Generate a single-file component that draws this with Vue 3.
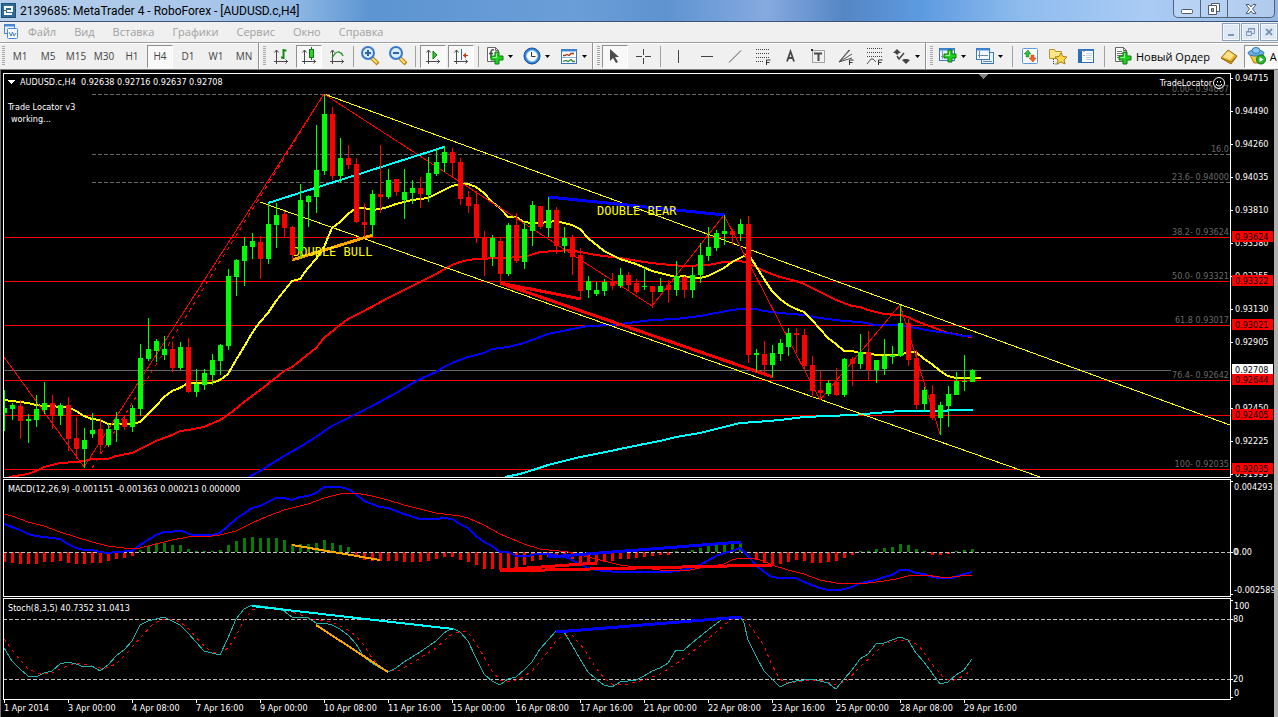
<script setup>
const frames = ['M1', 'M5', 'M15', 'M30', 'H1', 'H4', 'D1', 'W1', 'MN']
const menus = ['Файл', 'Вид', 'Вставка', 'Графики', 'Сервис', 'Окно', 'Справка']
const quote = 'AUDUSD.c,H4  0.92638 0.92716 0.92637 0.92708'

const axes = '<path d="M5.5 4v14M3 15.5h14M3.500 6.500l2-2.500l2 2.500M14.500 13.500l2 2l-2 2" fill="none" stroke="#4a4a4a"/>'
const plus = (x, y) => `<path transform="translate(${x} ${y})" d="M4 0h4v4h4v4h-4v4h-4v-4h-4v-4h4z" fill="#1fd01f" stroke="#0a7a12"/><path transform="translate(${x} ${y})" d="M5.500 1.500v4h-4" fill="none" stroke="#a8ffa0"/>`
const lens = '<path d="M12 12l6 6" stroke="#b8860b" stroke-width="4"/><path d="M12 12l5 5" stroke="#ffe27a" stroke-width="2"/><circle cx="8" cy="7" r="6" fill="#d8ecfb" stroke="#3b78c8" stroke-width="2"/><path d="M5 7h6" stroke="#2a62b8" stroke-width="2"/>'
const page = '<path d="M2.500 1.500h8l3 3v11h-11z" fill="#fff" stroke="#666"/><path d="M10.500 1.500v3h3" fill="none" stroke="#666"/>'

const icons = {
  bars: axes + '<path d="M12.500 3v10M12.500 4.500h3M10 11.500h2" stroke="#138a1b" stroke-width="2" fill="none"/>',
  candles: axes + '<path d="M12.500 1v13" stroke="#0a7a12"/><rect x="10.500" y="3.500" width="4" height="8" fill="#2bd42b" stroke="#0a7a12"/>',
  line: axes + '<path d="M5 12q4-7 7-6q3 1 4 4" stroke="#2a9a2f" stroke-width="1.500" fill="none"/>',
  zoomIn: lens + '<path d="M8 4v6" stroke="#2a62b8" stroke-width="2"/>',
  zoomOut: lens,
  scroll: axes + '<path d="M10 5l4 4l-4 4z" fill="#35cf35" stroke="#0a7a12"/>',
  shift: axes + '<path d="M10.500 3v11" stroke="#2f6db5"/><path d="M12 9.500h5" stroke="#c63a10"/><path d="M12 9.500l3-3v6z" fill="#c63a10"/>',
  indicators: page + '<path d="M9 4q-3-1-3 2v6M4 7.500h4" fill="none" stroke="#444" stroke-width="1.500"/>' + plus(6, 6),
  clock: '<circle cx="10" cy="10" r="8" fill="#2f86dd" stroke="#1b4f94"/><circle cx="10" cy="10" r="5.500" fill="#fff" stroke="#9cc8f0"/><path d="M9.500 6v4.500h4" fill="none" stroke="#333"/>',
  template: '<rect x="2.500" y="3.500" width="15" height="14" fill="#fff" stroke="#3c78bd"/><path d="M3 4.500h14" stroke="#3f86d8" stroke-width="2"/><path d="M3 11.500h14" stroke="#8ab4e0"/><path d="M4 9.500h2l2-1l2 1l2-2h3" fill="none" stroke="#a03018" stroke-width="1.300"/><path d="M4 15.500l3-1l2 1l3-2l2 2h2" fill="none" stroke="#2a8a30" stroke-width="1.300"/>',
  cursor: '<path d="M5 3v12l3-3l3 5l2-1l-3-5h4z" fill="#4a4a4a"/>',
  cross: '<path d="M10.500 3v6M10.500 12v6M3 10.500h6M12 10.500h6" stroke="#444"/>',
  vline: '<path d="M10.500 4v13" stroke="#444"/>',
  hline: '<path d="M5 10.500h12" stroke="#444"/>',
  trend: '<path d="M5 16.500l12-12" stroke="#555"/>',
  fibo: '<path d="M4 3.500h14M4 7.500h14M4 11.500h14M4 15.500h8" stroke="#444" stroke-dasharray="1 1"/><path d="M14.500 19v-5h4M14.500 16.500h3" fill="none" stroke="#333"/>',
  text: '<path d="M7 15.500l3.500-10l3.500 10M8 12h5" fill="none" stroke="#4a4a4a" stroke-width="1.800"/>',
  label: '<path d="M4.500 4.500h12v12h-12z" fill="none" stroke="#555" stroke-dasharray="1 1"/><path d="M6 7.500h8M10.500 7v8" stroke="#4a4a4a" stroke-width="2"/><path d="M3 3h2v2h-2z" fill="#333"/>',
  fan: '<path d="M3 16l10-12M3 16l13-8M3 16l13-4M3 16l11-12" stroke="#555" fill="none"/><path d="M13.500 19v-5h4M13.500 16.500h3" fill="none" stroke="#333"/>',
  retrace: '<path d="M3 2.500h15M3 6.500h15M3 10.500h15" stroke="#444" stroke-dasharray="1 1"/><path d="M3 18l4-5h2l3 3" fill="none" stroke="#555"/><path d="M14.500 19v-5h4M14.500 16.500h3" fill="none" stroke="#333"/>',
  arrows: '<path d="M1 7l4-4l4 4h-2l-2 2l-2-2zM10 14l2-1h3l3 1l-4 4z" fill="#444"/><path d="M5 10l2 3l5-6" fill="none" stroke="#444" stroke-width="1.500"/>',
  newChart: '<rect x="1.500" y="2.500" width="15" height="12" fill="#e8f3ff" stroke="#3c78bd"/><path d="M2 3.500h14" stroke="#3f86d8" stroke-width="2"/><path d="M4.500 5v8M3 10.500h11" stroke="#7c96b0"/>' + plus(6, 4),
  profiles: '<rect x="6.500" y="6.500" width="12" height="11" fill="#e8f3ff" stroke="#3c78bd"/><rect x="1.500" y="2.500" width="13" height="11" fill="#f4f9ff" stroke="#3c78bd"/><path d="M2 3.500h12" stroke="#3f86d8" stroke-width="2"/><path d="M4.500 5v7M3 9.500h10M8 15.500h9" stroke="#6f8aa8"/>',
  market: '<rect x="2.500" y="2.500" width="15" height="15" rx="1" fill="#fff" stroke="#5b9bd8"/><path d="M8 4l3 4h-2v3h-3v-3h-2z" fill="#2fbf3a" stroke="#167a20" stroke-width=".5"/><path d="M13 16l3-4h-2v-3h-3v3h-2z" fill="#f0622a" stroke="#b03a10" stroke-width=".5"/>',
  navigator: '<path d="M1.500 3.500h5l1 2h6v7h-12z" fill="#ffe68a" stroke="#b8922a"/><path d="M5.500 13v5h4" fill="none" stroke="#444" stroke-dasharray="1 1"/><path d="M13 7l2 3.500l4 .5l-3 3l1 4l-4-2l-4 2l1-4l-3-3l4-.5z" fill="#ffd84a" stroke="#a87a1a"/>',
  data: '<rect x="2.500" y="3.500" width="15" height="13" fill="#fff" stroke="#2f6cb8"/><path d="M3 4.500h14" stroke="#3f86d8"/><path d="M4.500 5v11" stroke="#2f6cb8" stroke-width="3"/><path d="M7.500 5.500h1M7.500 9.500h1" stroke="#d03020"/><path d="M10 7.500h6M10 9.500h6M10 11.500h6M10 13.500h6" stroke="#c4d6ea"/>',
  order: page + '<path d="M4 5.500h5M4 7.500h7M4 9.500h7M4 11.500h3" stroke="#777"/>' + plus(6, 6),
  gold: '<path d="M2 12l7-8l9 6l-6 8z" fill="#e7b32c" stroke="#9a6c10"/><path d="M2 12l10 4l6-6" fill="none" stroke="#9a6c10"/><path d="M4 11l5-6l6 4l-4 5z" fill="#ffe08a"/>',
  expert: '<path d="M3 9l4 8h7l3-8z" fill="#f3c93c" stroke="#a87a1a"/><ellipse cx="9" cy="7" rx="8" ry="3" fill="#6ab2e8" stroke="#2f75b0"/><ellipse cx="9" cy="4.500" rx="4" ry="3" fill="#8ac8f2" stroke="#2f75b0"/><circle cx="14" cy="13.500" r="4.500" fill="#28b62c" stroke="#0f7a16"/><path d="M12.500 11l4 2.500l-4 2.500z" fill="#fff"/>'
}

const groups = [
  [
    { i: 'bars', t: 'Бары' }, { i: 'candles', t: 'Свечи', on: 1 }, { i: 'line', t: 'Линия' }, { sep: 5 },
    { i: 'zoomIn', t: 'Увеличить' }, { i: 'zoomOut', t: 'Уменьшить' }, { sep: 7 },
    { i: 'scroll', t: 'Автопрокрутка', on: 1 }, { i: 'shift', t: 'Сдвиг графика', on: 1 }, { sep: 6 },
    { i: 'indicators', t: 'Индикаторы', drop: 1 }, { i: 'clock', t: 'Периоды', drop: 1 }, { i: 'template', t: 'Шаблоны', drop: 1 }
  ],
  [
    { i: 'cursor', t: 'Курсор', on: 1 }, { i: 'cross', t: 'Перекрестие' }, { sep: 7 },
    { i: 'vline', t: 'Вертикальная линия' }, { i: 'hline', t: 'Горизонтальная линия' }, { i: 'trend', t: 'Трендовая линия' },
    { i: 'fibo', t: 'Линии Фибоначчи' }, { i: 'text', t: 'Текст' }, { i: 'label', t: 'Текстовая метка' },
    { i: 'fan', t: 'Веер Фибоначчи' }, { i: 'retrace', t: 'Расширение Фибоначчи' }, { i: 'arrows', t: 'Стрелки', drop: 1 }
  ],
  [
    { i: 'newChart', t: 'Новый график', drop: 1 }, { i: 'profiles', t: 'Профили', drop: 1 }, { sep: 8 },
    { i: 'market', t: 'Обзор рынка' }, { i: 'navigator', t: 'Навигатор' }, { i: 'data', t: 'Окно данных' }, { sep: 8 }
  ]
]

// direction, high, body top, body bottom, low (one bar every 8 px)
const bars = `G 390 408 413 431|G 403 405 409 420|R 400 406 421 439|G 414 419 421 443|G 395 409 420 427|G 382 403 410 414|R 395 403 416 429|G 403 405 416 425|R 397 405 439 451|R 417 438 449 459|G 428 440 449 468|G 413 430 434 438|R 418 429 445 454|G 424 429 445 447|G 412 419 430 442|R 416 419 427 430|G 405 408 427 432|G 344 358 409 416|G 318 349 359 361|G 339 341 351 362|G 336 349 355 360|R 342 349 368 372|G 342 347 368 370|R 338 347 392 393|G 369 384 392 397|G 369 373 385 390|G 354 360 375 385|G 344 345 361 375|G 269 276 346 350|G 259 260 277 296|G 237 246 261 286|G 233 241 247 259|R 236 242 259 279|G 203 224 259 264|G 203 215 225 248|R 211 214 228 237|R 226 227 255 260|G 184 200 251 259|G 195 196 202 227|G 125 170 197 213|G 94 114 171 175|R 107 114 176 180|G 138 158 176 183|R 145 158 165 169|R 158 164 222 223|R 203 222 225 237|G 190 194 225 236|R 145 194 197 213|G 169 180 197 199|R 179 179 192 196|G 169 192 200 219|G 180 188 193 204|R 177 188 194 208|G 157 173 195 202|G 149 162 174 176|G 146 152 163 172|R 148 152 163 177|R 158 162 199 205|R 191 197 206 213|R 191 204 237 243|R 231 237 258 276|G 235 238 257 266|R 238 241 274 282|G 223 225 274 276|R 213 225 261 263|G 222 229 262 269|G 201 205 231 246|R 206 206 227 229|G 197 210 228 237|R 207 210 246 254|G 227 238 246 253|R 235 237 257 275|R 248 255 291 299|G 276 281 290 298|G 282 290 294 296|G 279 282 291 296|R 273 281 286 290|G 268 275 286 288|R 272 275 285 291|R 279 283 292 294|G 268 286 287 290|R 286 286 292 308|G 278 286 292 292|R 280 285 290 303|G 261 276 290 296|R 276 277 290 298|G 267 275 290 298|G 243 255 275 283|G 227 247 256 261|G 230 233 248 251|G 215 231 234 245|R 229 231 235 245|G 219 224 234 241|R 216 224 355 363|G 349 353 355 372|R 341 354 365 374|G 345 353 365 377|G 339 343 354 361|G 328 333 347 356|R 328 333 335 353|R 329 335 366 370|R 356 365 391 397|R 370 390 393 400|G 380 383 394 396|R 368 382 395 396|G 358 359 395 397|R 357 359 364 386|G 334 352 364 369|R 331 352 370 380|G 360 360 370 383|G 339 356 369 375|G 346 355 357 364|G 305 323 356 357|R 319 323 360 366|R 350 358 405 409|G 387 390 404 411|R 385 394 418 420|G 402 405 418 435|G 386 394 406 427|G 372 381 395 395|G 355 381 382 391|G 369 370 382 382`
const candles = bars.split('|').map((s, i) => {
  const [d, h, t, b, l] = s.split(' ')
  return { x: 4 + 8 * i, c: d === 'G' ? '#00ff00' : '#ff0000', h: +h, t: +t, b: +b, l: +l }
})

const redLines = [237, 281, 325, 380, 415, 469]
const fibs = [
  [94, '0.00- 0.94607'], [154, '16.0'], [182, '23.6- 0.94000'], [237, '38.2- 0.93624'],
  [281, '50.0- 0.93321'], [325, '61.8 0.93017'], [380, '76.4- 0.92642'], [469, '100- 0.92035']
]
const averages = [
  { c: '#00ffff', p: '505,477 520,474 536,469 548,465 564,461 580,457 596,454 620,449 644,444 660,441 676,437 700,433 724,427 740,423 756,422 780,420 804,417 828,416 852,415 876,413 900,411 945,411 950,410 973,410' },
  { c: '#ff0000', p: '9,477 28,474 36,471 44,467 60,463 76,462 84,461 92,459 108,459 116,456 132,453 140,449 156,441 172,435 180,431 188,430 204,427 220,420 228,415 244,402 268,384 284,371 292,367 316,348 324,338 340,325 348,319 356,315 364,311 388,298 412,286 436,274 452,265 460,262 468,260 476,259 500,258 524,257 540,252 556,251 570,250 580,252 596,255 620,258 644,262 660,264 684,266 708,265 724,262 740,261 748,263 756,267 764,271 780,277 796,281 804,284 820,292 836,300 852,306 860,307 868,310 884,314 900,315 908,317 916,321 932,327 948,333 956,334 964,336 972,337' },
  { c: '#0000ff', p: '247,478 260,471 284,456 300,447 316,437 330,427 348,418 372,406 396,393 418,380 436,372 444,367 452,363 468,357 484,353 492,349 508,347 524,343 548,334 572,329 588,326 612,325 628,323 652,320 676,319 700,316 716,313 732,310 740,309 756,309 764,311 780,313 804,315 820,318 844,321 860,322 876,325 900,325 916,328 932,331 948,333 964,336 972,336' },
  { c: '#ffff00', p: '4,400 20,402 28,403 36,405 44,406 52,406 60,407 68,407 76,411 84,416 92,419 100,420 108,424 132,424 140,422 148,414 156,406 164,397 172,391 180,388 188,383 212,383 220,380 228,374 236,360 244,347 252,333 260,322 268,313 276,301 284,291 292,281 300,279 308,268 316,259 324,247 332,228 340,222 348,214 356,208 364,208 372,210 380,209 388,207 396,204 404,202 412,200 420,199 428,198 436,194 444,190 452,186 460,184 468,184 476,187 484,193 492,202 500,208 508,217 516,217 524,222 532,223 540,223 548,222 556,221 572,225 580,229 588,238 604,251 612,255 620,259 636,264 652,271 668,275 676,277 684,276 692,278 700,278 708,276 716,272 724,268 732,262 740,258 748,254 756,266 764,279 772,291 780,299 788,305 796,309 804,312 812,320 820,329 828,338 836,344 844,351 852,351 860,353 868,353 876,355 884,355 900,355 908,352 916,352 924,359 932,364 940,371 948,376 956,378 981,378' }
]
const trends = [
  { c: '#ffff00', w: 1, p: '324,94 1230,425' },
  { c: '#ffff00', w: 1, p: '260,202 1040,477' },
  { c: '#ff0000', w: 1, p: '4,357 84,467 324,94 652,306 724,215 820,400 900,305 940,434' },
  { c: '#ff0000', w: 1, d: '4 4', p: '92,468 324,94' },
  { c: '#00ffff', w: 2, p: '268,203 444,147' },
  { c: '#ffa500', w: 3, p: '292,260 373,235' },
  { c: '#0000ff', w: 3, p: '548,197 725,215' },
  { c: '#ff0000', w: 3, p: '500,283 581,299' },
  { c: '#ff0000', w: 3, p: '500,283 773,377' }
]
const scale = [
  [78, '0.94715'], [111, '0.94490'], [144, '0.94260'], [177, '0.94035'], [210, '0.93810'], [243, '0.93580'], [276, '0.93355'],
  [309, '0.93130'], [342, '0.92905'], [408, '0.92450'], [441, '0.92225'], [474, '0.91995']
]
const tags = [
  [370, '0.92708', '#ffffff'], [237, '0.93624', '#ff0000'], [281, '0.93322', '#ff0000'], [325, '0.93021', '#ff0000'],
  [380, '0.92644', '#ff0000'], [415, '0.92405', '#ff0000'], [469, '0.92035', '#ff0000']
]

// end of each histogram bar; zero sits at 552
const hist = [562, 563, 564, 564, 564, 562, 562, 561, 563, 564, 564, 563, 563, 561, 559, 558, 556, 550, 546, 543, 543, 545, 545, 549, 551, 551, 551, 550, 545, 541, 538, 537, 538, 538, 538, 540, 544, 544, 544, 543, 540, 543, 545, 547, 556, 560, 561, 561, 561, 561, 562, 562, 562, 561, 559, 557, 557, 560, 562, 565, 569, 569, 570, 569, 569, 565, 561, 560, 557, 557, 558, 559, 563, 563, 562, 562, 561, 559, 559, 558, 557, 556, 555, 555, 551, 552, 550, 548, 546, 545, 545, 544, 543, 552, 560, 563, 565, 564, 562, 560, 561, 563, 563, 562, 561, 558, 555, 551, 551, 549, 548, 547, 544, 545, 549, 551, 555, 555, 554, 551, 550, 549]
  .map((y, i) => ({ x: 3 + 8 * i, y: Math.min(y, 552), h: Math.abs(y - 552), c: y > 552 ? '#ff0000' : '#008000' }))
const macd = [
  { c: '#0000ff', w: 2, p: '4,524 20,530 28,534 36,536 44,537 60,539 68,544 76,548 84,550 92,550 100,552 108,553 116,552 132,551 140,545 156,535 164,532 182,531 192,535 212,535 220,533 228,526 236,519 252,508 260,506 276,498 284,498 292,500 300,497 308,496 316,493 324,487 340,487 348,489 356,494 364,501 380,507 388,508 404,514 420,519 436,519 444,518 452,519 460,524 468,528 476,536 484,542 492,546 500,552 508,552 516,556 528,556 536,554 548,554 560,556 568,558 580,564 590,569 604,571 620,572 668,572 684,570 700,565 716,556 724,553 732,551 740,548 748,556 756,565 764,572 772,577 780,578 796,578 804,582 820,588 828,590 840,590 852,587 860,583 876,580 884,577 892,575 900,570 908,570 916,573 924,574 932,577 940,578 952,578 964,574 972,572' },
  { c: '#ff0000', w: 1, p: '4,514 12,516 28,522 44,526 60,532 76,537 92,542 108,546 124,548 140,548 156,544 172,540 188,537 212,536 220,535 236,531 252,523 268,516 284,510 308,504 324,498 340,494 356,493 372,496 388,500 404,505 420,509 436,513 460,516 468,518 484,525 500,534 524,544 540,549 568,552 580,555 592,558 620,565 644,568 660,570 690,570 700,568 724,564 732,560 740,558 752,558 764,561 772,565 788,570 804,574 820,580 836,583 852,584 868,583 884,581 896,579 908,576 925,575 940,577 952,577 968,575 972,575' },
  { c: '#ffa500', w: 2, p: '292,545 380,560' },
  { c: '#ff0000', w: 3, p: '500,570 597,563' },
  { c: '#ff0000', w: 3, p: '500,571 773,565' },
  { c: '#0000ff', w: 3, p: '548,557 741,542' }
]
const stoch = [
  { c: '#ff0000', w: 1, d: '3 4', p: '4,639 16,655 28,669 40,674 52,673 60,669 76,663 92,666 104,669 116,664 128,652 140,638 152,625 160,620 172,619 180,622 190,630 200,642 210,651 220,654 228,648 236,636 244,620 252,610 260,607 276,608 292,612 316,620 332,622 348,630 356,636 364,645 372,658 380,667 388,671 400,670 412,663 436,648 452,634 464,631 470,635 480,650 492,671 500,680 508,682 520,679 532,671 544,657 556,641 564,635 572,635 584,649 596,668 604,678 612,684 628,684 644,680 660,674 676,664 700,646 724,625 734,618 744,619 752,628 764,646 772,665 780,679 788,684 804,681 820,680 836,685 848,680 860,667 876,652 884,644 900,640 910,640 920,647 932,664 944,678 952,681 964,676 972,669' },
  { c: '#20b2aa', w: 1, p: '4,648 12,661 20,669 28,676 38,676 44,673 52,671 60,664 68,662 76,664 84,667 92,666 100,671 108,665 116,656 124,650 132,641 140,625 148,621 156,619 164,617 172,621 180,625 188,633 196,642 204,651 212,653 220,655 228,638 236,619 244,609 252,605 260,606 276,608 284,611 292,617 308,618 316,623 324,623 332,625 340,629 348,635 356,644 364,657 372,663 380,668 388,672 396,668 404,662 420,652 436,641 444,633 452,628 460,632 468,641 476,658 484,674 492,681 500,685 508,679 516,677 524,670 532,662 540,649 548,640 556,631 564,632 572,645 580,659 588,672 596,679 604,685 612,687 620,682 636,680 644,676 652,671 660,668 668,663 676,650 684,650 692,643 708,630 724,618 740,616 744,623 748,640 756,656 764,671 772,679 780,687 788,683 796,681 804,680 812,679 820,681 828,683 836,689 844,679 852,670 860,659 868,654 876,644 884,643 892,640 900,637 908,640 916,653 924,662 932,673 940,684 948,682 956,675 964,670 972,659' },
  { c: '#00ffff', w: 2, p: '252,606 453,629' },
  { c: '#ffa500', w: 2, p: '316,625 388,672' },
  { c: '#0000ff', w: 3, p: '556,632 741,617' }
]
const dates = ['1 Apr 2014', '3 Apr 00:00', '4 Apr 08:00', '7 Apr 16:00', '9 Apr 00:00', '10 Apr 08:00', '11 Apr 16:00', '15 Apr 00:00', '16 Apr 08:00', '17 Apr 16:00', '21 Apr 00:00', '22 Apr 08:00', '23 Apr 16:00', '25 Apr 00:00', '28 Apr 08:00', '29 Apr 16:00']
</script>

<template>
  <div class="window">
    <header class="title">
      <svg class="logo" width="15" height="15" viewBox="0 0 15 15">
        <rect width="15" height="15" fill="#1d4f78" />
        <rect x="1" y="1" width="13" height="13" fill="#2f6a98" />
        <path d="M4 12V8M4 7V4h7v4H6M4 11h7" fill="none" stroke="#fff" stroke-width="2" />
      </svg>
      <h1>2139685: MetaTrader 4 - RoboForex - [AUDUSD.c,H4]</h1>
      <div class="caption">
        <button aria-label="Свернуть"><svg width="14" height="14" viewBox="0 0 14 14"><rect x="1.500" y="7.500" width="11" height="4" rx="1" fill="#fff" stroke="#4c5a6c" /></svg></button>
        <button aria-label="Развернуть"><svg width="14" height="14" viewBox="0 0 14 14"><path d="M4.500 1.500h8v8h-8z" fill="#fff" stroke="#4c5a6c" /><path d="M1.500 3.500h8v9h-8z" fill="#fff" stroke="#4c5a6c" /><path d="M4.500 6.500h2v3h-2z" fill="#9db8d8" stroke="#4c5a6c" /></svg></button>
        <button class="close" aria-label="Закрыть"><svg width="14" height="14" viewBox="0 0 14 14"><path d="M2 2.500h3l2 2.500l2-2.500h3l-3.500 4.500l3.500 4.500h-3l-2-2.500l-2 2.500h-3l3.500-4.500z" fill="#fff" stroke="#4c5a6c" /></svg></button>
      </div>
    </header>

    <nav class="menu">
      <svg width="16" height="16" viewBox="0 0 16 16">
        <rect x="1.500" y=".5" width="10" height="9" fill="#eaf3ff" stroke="#4b86d2" /><path d="M2 1.500h9" stroke="#4b86d2" stroke-width="2" />
        <rect x="4.500" y="4.500" width="10" height="10" rx="1" fill="#f6faff" stroke="#4b86d2" />
        <path d="M6 8l2 4l1.500-4l1.500 4l2-3" fill="none" stroke="#3f7ad0" />
      </svg>
      <button v-for="m in menus" :key="m">{{ m }}</button>
      <div class="mdi">
        <button aria-label="Свернуть график"><svg width="11" height="11"><path d="M2 8h6" stroke="#7f97b4" stroke-width="2" /></svg></button>
        <button aria-label="Восстановить график"><svg width="11" height="11"><path d="M3.500 4V1.500h6v5H7M1.500 4.500h5v4h-5zM3 2h7M1 5h6" fill="none" stroke="#7f97b4" /></svg></button>
        <button aria-label="Закрыть график"><svg width="11" height="11"><path d="M2 2l6 6M8 2l-6 6" stroke="#7f97b4" stroke-width="2" /></svg></button>
      </div>
    </nav>

    <div class="tools">
      <div class="group">
        <i class="grip" />
        <button v-for="f in frames" :key="f" :class="{ on: f === 'H4' }">{{ f }}</button>
      </div>
      <div v-for="(g, k) in groups" :key="k" class="group">
        <i class="grip" />
        <template v-for="(b, n) in g" :key="n">
          <i v-if="b.sep" class="sep" :style="{ width: b.sep + 'px' }" />
          <button v-else :class="{ on: b.on, drop: b.drop }" :aria-label="b.t">
            <svg width="20" height="20" viewBox="0 0 20 20" v-html="icons[b.i]" />
            <svg v-if="b.drop" class="caret" width="5" height="3" viewBox="0 0 5 3"><path d="M0 0h5L2.500 3z" /></svg>
          </button>
        </template>
        <template v-if="k === 2">
          <button class="wide"><svg width="20" height="20" viewBox="0 0 20 20" v-html="icons.order" /><span>Новый Ордер</span></button>
          <button aria-label="MetaEditor"><svg width="20" height="20" viewBox="0 0 20 20" v-html="icons.gold" /></button>
          <button class="wide on auto"><svg width="20" height="20" viewBox="0 0 20 20" v-html="icons.expert" /><span>А</span></button>
        </template>
      </div>
    </div>

    <main class="charts">
      <div class="pane price">
        <svg>
          <g transform="translate(-4 -74)" class="crisp">
            <line v-for="y in [94, 154, 182]" :key="y" x1="92" x2="4000" :y1="y + 0.5" :y2="y + 0.5" stroke="#696969" stroke-dasharray="4 2" />
            <rect x="4" y="370" width="1167" height="1" fill="#696969" />
            <rect v-for="y in redLines" :key="y" x="4" :y="y" width="4000" height="1" fill="#ff0000" />
            <polyline v-for="a in averages" :key="a.c" :points="a.p" :stroke="a.c" stroke-width="2" fill="none" />
            <polyline v-for="(t, n) in trends" :key="n" :points="t.p" :stroke="t.c" :stroke-width="t.w" :stroke-dasharray="t.d" fill="none" />
            <text class="mono" x="293" y="256">DOUBLE BULL</text>
            <text class="mono" x="597" y="215">DOUBLE BEAR</text>
            <g v-for="c in candles" :key="c.x" :fill="c.c">
              <rect :x="c.x" :y="c.h" width="1" :height="c.l - c.h" />
              <rect :x="c.x - 2" :y="c.t" width="5" :height="c.b - c.t" />
            </g>
            <path d="M979 74h9l-4 5h-1z" fill="#808080" />
            <path d="M7 80h8l-4 4z" fill="#fff" />
            <text class="quote" x="20" y="85">{{ quote }}</text>
            <text x="8" y="110">Trade Locator v3</text>
            <text x="11" y="122">working...</text>
          </g>
          <g transform="translate(0 -74)">
            <text v-for="f in fibs" :key="f[0]" class="fib" x="100%" dx="-1" :y="f[0] - 2">{{ f[1] }}</text>
            <text class="end" x="100%" dx="-18" y="86">TradeLocator</text>
          </g>
          <svg x="100%" y="3" width="14" height="14" overflow="visible">
            <g transform="translate(-17 0)" fill="none" stroke="#fff">
              <circle cx="6" cy="6" r="5.500" /><path d="M3 7q3 4 6 0M4.500 4v1.500M7.500 4v1.500" />
            </g>
          </svg>
        </svg>
      </div>
      <svg class="axis">
        <g transform="translate(0 -73)">
          <template v-for="s in scale" :key="s[0]">
            <rect x="0" :y="s[0]" width="2" height="1" fill="#fff" />
            <text x="4" :y="s[0] + 3">{{ s[1] }}</text>
          </template>
          <template v-for="s in tags" :key="s[0]">
            <rect x="1" :y="s[0] - 6" width="41" height="11" :fill="s[2]" />
            <text class="tag" x="4" :y="s[0] + 3">{{ s[1] }}</text>
          </template>
        </g>
      </svg>

      <div class="pane macd">
        <svg>
          <g transform="translate(-4 -480)" class="crisp">
            <rect v-for="h in hist" :key="h.x" :x="h.x" :y="h.y" width="3" :height="h.h" :fill="h.c" />
            <line x1="3" x2="4000" y1="552.500" y2="552.500" stroke="#c0c0c0" stroke-dasharray="4 2" />
            <polyline v-for="(t, n) in macd" :key="n" :points="t.p" :stroke="t.c" :stroke-width="t.w" fill="none" />
            <text x="8" y="492">MACD(12,26,9) -0.001151 -0.001363 0.000213 0.000000</text>
          </g>
        </svg>
      </div>
      <svg class="axis">
        <g transform="translate(0 -479)">
          <rect v-for="y in [481, 552, 594]" :key="y" x="0" :y="y" width="2" height="1" fill="#fff" />
          <text x="3" y="490">0.004293</text>
          <text x="2" y="555">0</text>
          <text x="3" y="555">0.00</text>
          <text x="3" y="593">-0.002589</text>
        </g>
      </svg>

      <div class="pane stoch">
        <svg>
          <g transform="translate(-4 -599)" class="crisp">
            <line v-for="y in [619, 679]" :key="y" x1="3" x2="4000" :y1="y + 0.5" :y2="y + 0.5" stroke="#c0c0c0" stroke-dasharray="4 2" />
            <polyline v-for="(t, n) in stoch" :key="n" :points="t.p" :stroke="t.c" :stroke-width="t.w" :stroke-dasharray="t.d" fill="none" />
            <text x="8" y="611">Stoch(8,3,5) 40.7352 31.0413</text>
          </g>
        </svg>
      </div>
      <svg class="axis">
        <g transform="translate(0 -598)">
          <rect v-for="y in [600, 619, 679, 697]" :key="y" x="0" :y="y" width="2" height="1" fill="#fff" />
          <text x="3" y="609">100</text>
          <text x="2" y="622">80</text>
          <text x="2" y="682">20</text>
          <text x="3" y="696">0</text>
        </g>
      </svg>

      <div class="dates">
        <time v-for="d in dates" :key="d">{{ d }}</time>
      </div>
    </main>
  </div>
</template>

<style>
body { margin: 0; background: #000; overflow: hidden; }
</style>

<style scoped>
.window { font-family: "Open Sans", "Noto Sans", sans-serif; font-size: 11px; color: #000; }
button { appearance: none; border: 0; background: none; padding: 0; margin: 0; font: inherit; color: inherit; }
svg { display: block; }

.title {
  display: flex; align-items: center; gap: 4px; height: 21px; padding-left: 1px;
  border-bottom: 1px solid #3d5577;
  box-sizing: content-box;
  background: linear-gradient(90deg, #b4cdea 0, #a9c7ea 16%, #8fb8e4 23%, #5c95d2 29%, #6b9ed8 45%, #5e93d0 52%, #86aae0 60%, #5586c4 66%, #5c9ae0 72%, #8fbcee 80%, #aaccf4 90%, #93b5e0 100%);
}
.title h1 { flex: 1; margin: 0; font-family: Roboto, "Noto Sans", sans-serif; font-size: 12px; font-weight: 400; line-height: 20px; white-space: nowrap; }
.caption { display: flex; align-self: flex-start; height: 17px; margin-right: 3px; border: 1px solid #50627c; border-top: 0; border-radius: 0 0 5px 5px; background: rgba(210, 228, 250, .45); }
.caption button { display: grid; place-items: center; width: 27px; border-right: 1px solid #50627c; }
.caption .close { width: 46px; border-right: 0; }

.menu { display: flex; align-items: center; height: 20px; padding-left: 3px; background: #f0f0f0; border-bottom: 1px solid #a0a0a0; color: #a0a0a0; }
.menu > button { padding: 0 9px; line-height: 20px; }
.mdi { display: flex; gap: 1px; margin-left: auto; }
.mdi button { display: grid; place-items: center; width: 18px; height: 18px; border: 1px solid #8aa2bf; background: #dfe9f5; box-shadow: inset 0 0 0 1px #f4f8fc; }

.tools { display: flex; height: 26px; background: #f0f0f0; border-bottom: 1px solid #808080; overflow: hidden; font-size: 10px; color: #444; }
.group { display: flex; flex: none; align-items: center; padding-left: 2px; border-right: 1px solid #909090; box-shadow: inset 0 1px #fff; }
.group + .group { padding-left: 3px; border-left: 1px solid #fff; }
.grip { width: 3px; height: 20px; margin-right: 1px; background: repeating-linear-gradient(#a8a8a8 0 1px, #f0f0f0 1px 2px); }
.group button { display: flex; align-items: center; justify-content: center; width: 26px; height: 23px; margin: 0 1px; box-sizing: border-box; }
.group button.on { border: 1px solid #fff; border-top-color: #909090; border-left-color: #909090; background: #f8f8f8; }
.group button.drop { width: 35px; gap: 3px; justify-content: flex-start; padding-left: 3px; }
.group button.wide { width: auto; gap: 3px; padding: 0 4px; font-size: 11px; color: #000; white-space: nowrap; }
.group button.auto { padding: 0 2px; }
.sep { display: flex; justify-content: center; }
.sep::before { content: ""; width: 1px; height: 21px; background: #a0a0a0; }

.charts {
  display: grid; grid-template-columns: minmax(0, 1fr) 43px; grid-template-rows: 405px 118px 102px 17px; row-gap: 1px;
  padding: 3px 0 0 2px; border-left: 1px solid #707070; border-right: 4px solid #b0b0b0; background: #000;
  font-family: "DejaVu Sans Condensed", "DejaVu Sans", sans-serif; font-size: 9px;
}
.pane { border: 1px solid #fff; overflow: hidden; }
.pane > svg { width: 100%; height: 100%; overflow: hidden; }
.axis { width: 100%; height: 100%; overflow: hidden; }
.charts text { fill: #fff; }
.charts .quote { white-space: pre; }
.charts .mono { font-family: "DejaVu Sans Mono", monospace; font-size: 12px; fill: #ffff00; }
.charts .fib { fill: #696969; text-anchor: end; }
.charts .end { text-anchor: end; }
.charts .tag { fill: #000; }
.crisp { shape-rendering: crispEdges; }
.dates { display: flex; margin-top: -1px; padding-left: 1px; color: #fff; overflow: hidden; }
.dates time { flex: 0 0 64px; box-sizing: border-box; line-height: 17px; white-space: nowrap; background: linear-gradient(#fff, #fff) 0 0 / 1px 3px no-repeat; }
</style>
